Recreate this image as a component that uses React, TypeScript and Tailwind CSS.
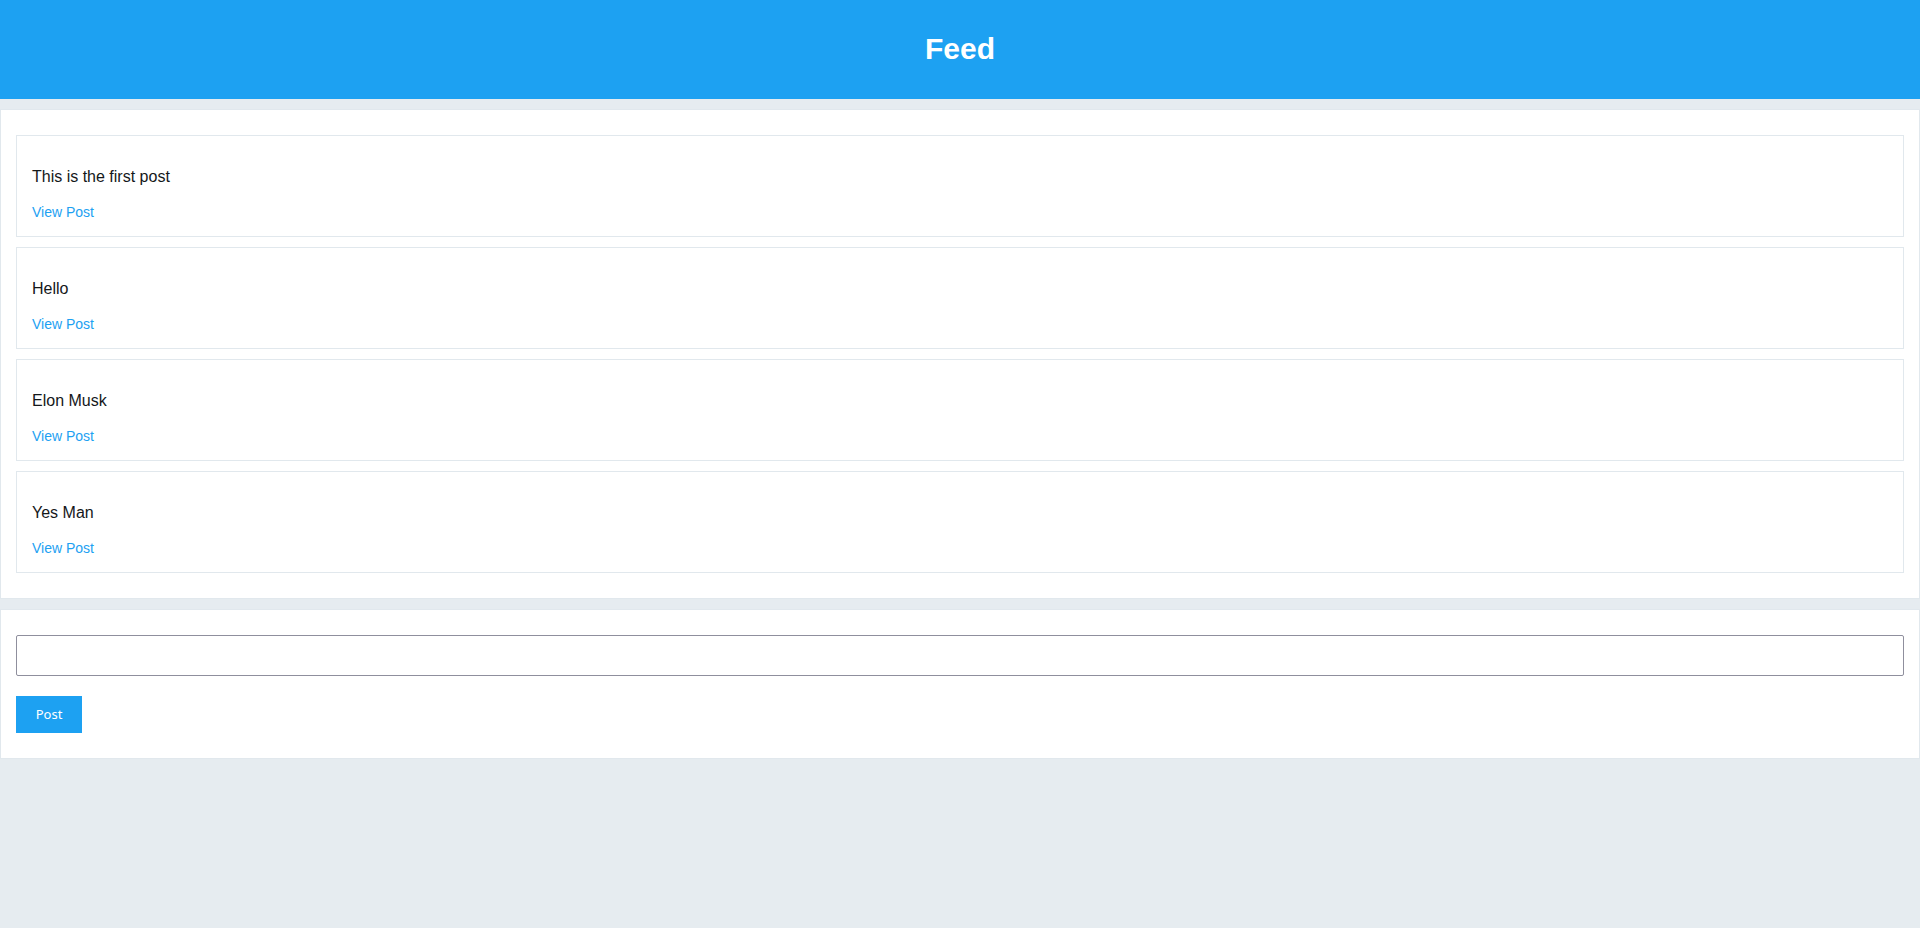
import { useState } from "react"

type Post = { id: number; text: string }

const initialPosts: Post[] = [
  { id: 1, text: "This is the first post" },
  { id: 2, text: "Hello" },
  { id: 3, text: "Elon Musk" },
  { id: 4, text: "Yes Man" },
]

function PostCard({ post }: { post: Post }) {
  return (
    <div className="border border-[#e1e8ed] bg-white px-[15px] pt-[15px] pb-[14px]">
      <p className="mt-[17px] mb-[16px] text-[16px] leading-[18px] text-[#14171a]">{post.text}</p>
      <a href="#" className="block text-[14px] leading-[20px] text-[#1da1f2]">
        View Post
      </a>
    </div>
  )
}

export default function App() {
  const [posts, setPosts] = useState<Post[]>(initialPosts)
  const [text, setText] = useState("")

  const submit = () => {
    if (!text.trim()) return
    setPosts([...posts, { id: Date.now(), text }])
    setText("")
  }

  return (
    <div className="min-h-screen bg-[#e6ecf0] font-['Liberation_Sans',Arial,sans-serif]">
      <header className="flex h-[99px] items-center justify-center bg-[#1da1f2] pb-[2px]">
        <h1 className="text-[30px] font-bold text-white">Feed</h1>
      </header>

      <main>
        {/* feed */}
        <section className="mt-[10px] flex flex-col gap-[10px] border border-[#e1e8ed] bg-white px-[15px] py-[25px]">
          {posts.map((post) => (
            <PostCard key={post.id} post={post} />
          ))}
        </section>

        {/* new post form */}
        <section className="mt-[10px] flex flex-col items-start border border-[#e1e8ed] bg-white px-[15px] py-[25px]">
          <input
            type="text"
            value={text}
            onChange={(e) => setText(e.target.value)}
            className="h-[41px] w-full rounded-[2px] border border-[#8f8f9d] bg-white px-2 text-[16px]"
          />
          <button
            onClick={submit}
            className="mt-[20px] h-[37px] w-[66px] bg-[#1da1f2] font-['Noto_Sans',sans-serif] text-[13px] text-white"
          >
            Post
          </button>
        </section>
      </main>
    </div>
  )
}
